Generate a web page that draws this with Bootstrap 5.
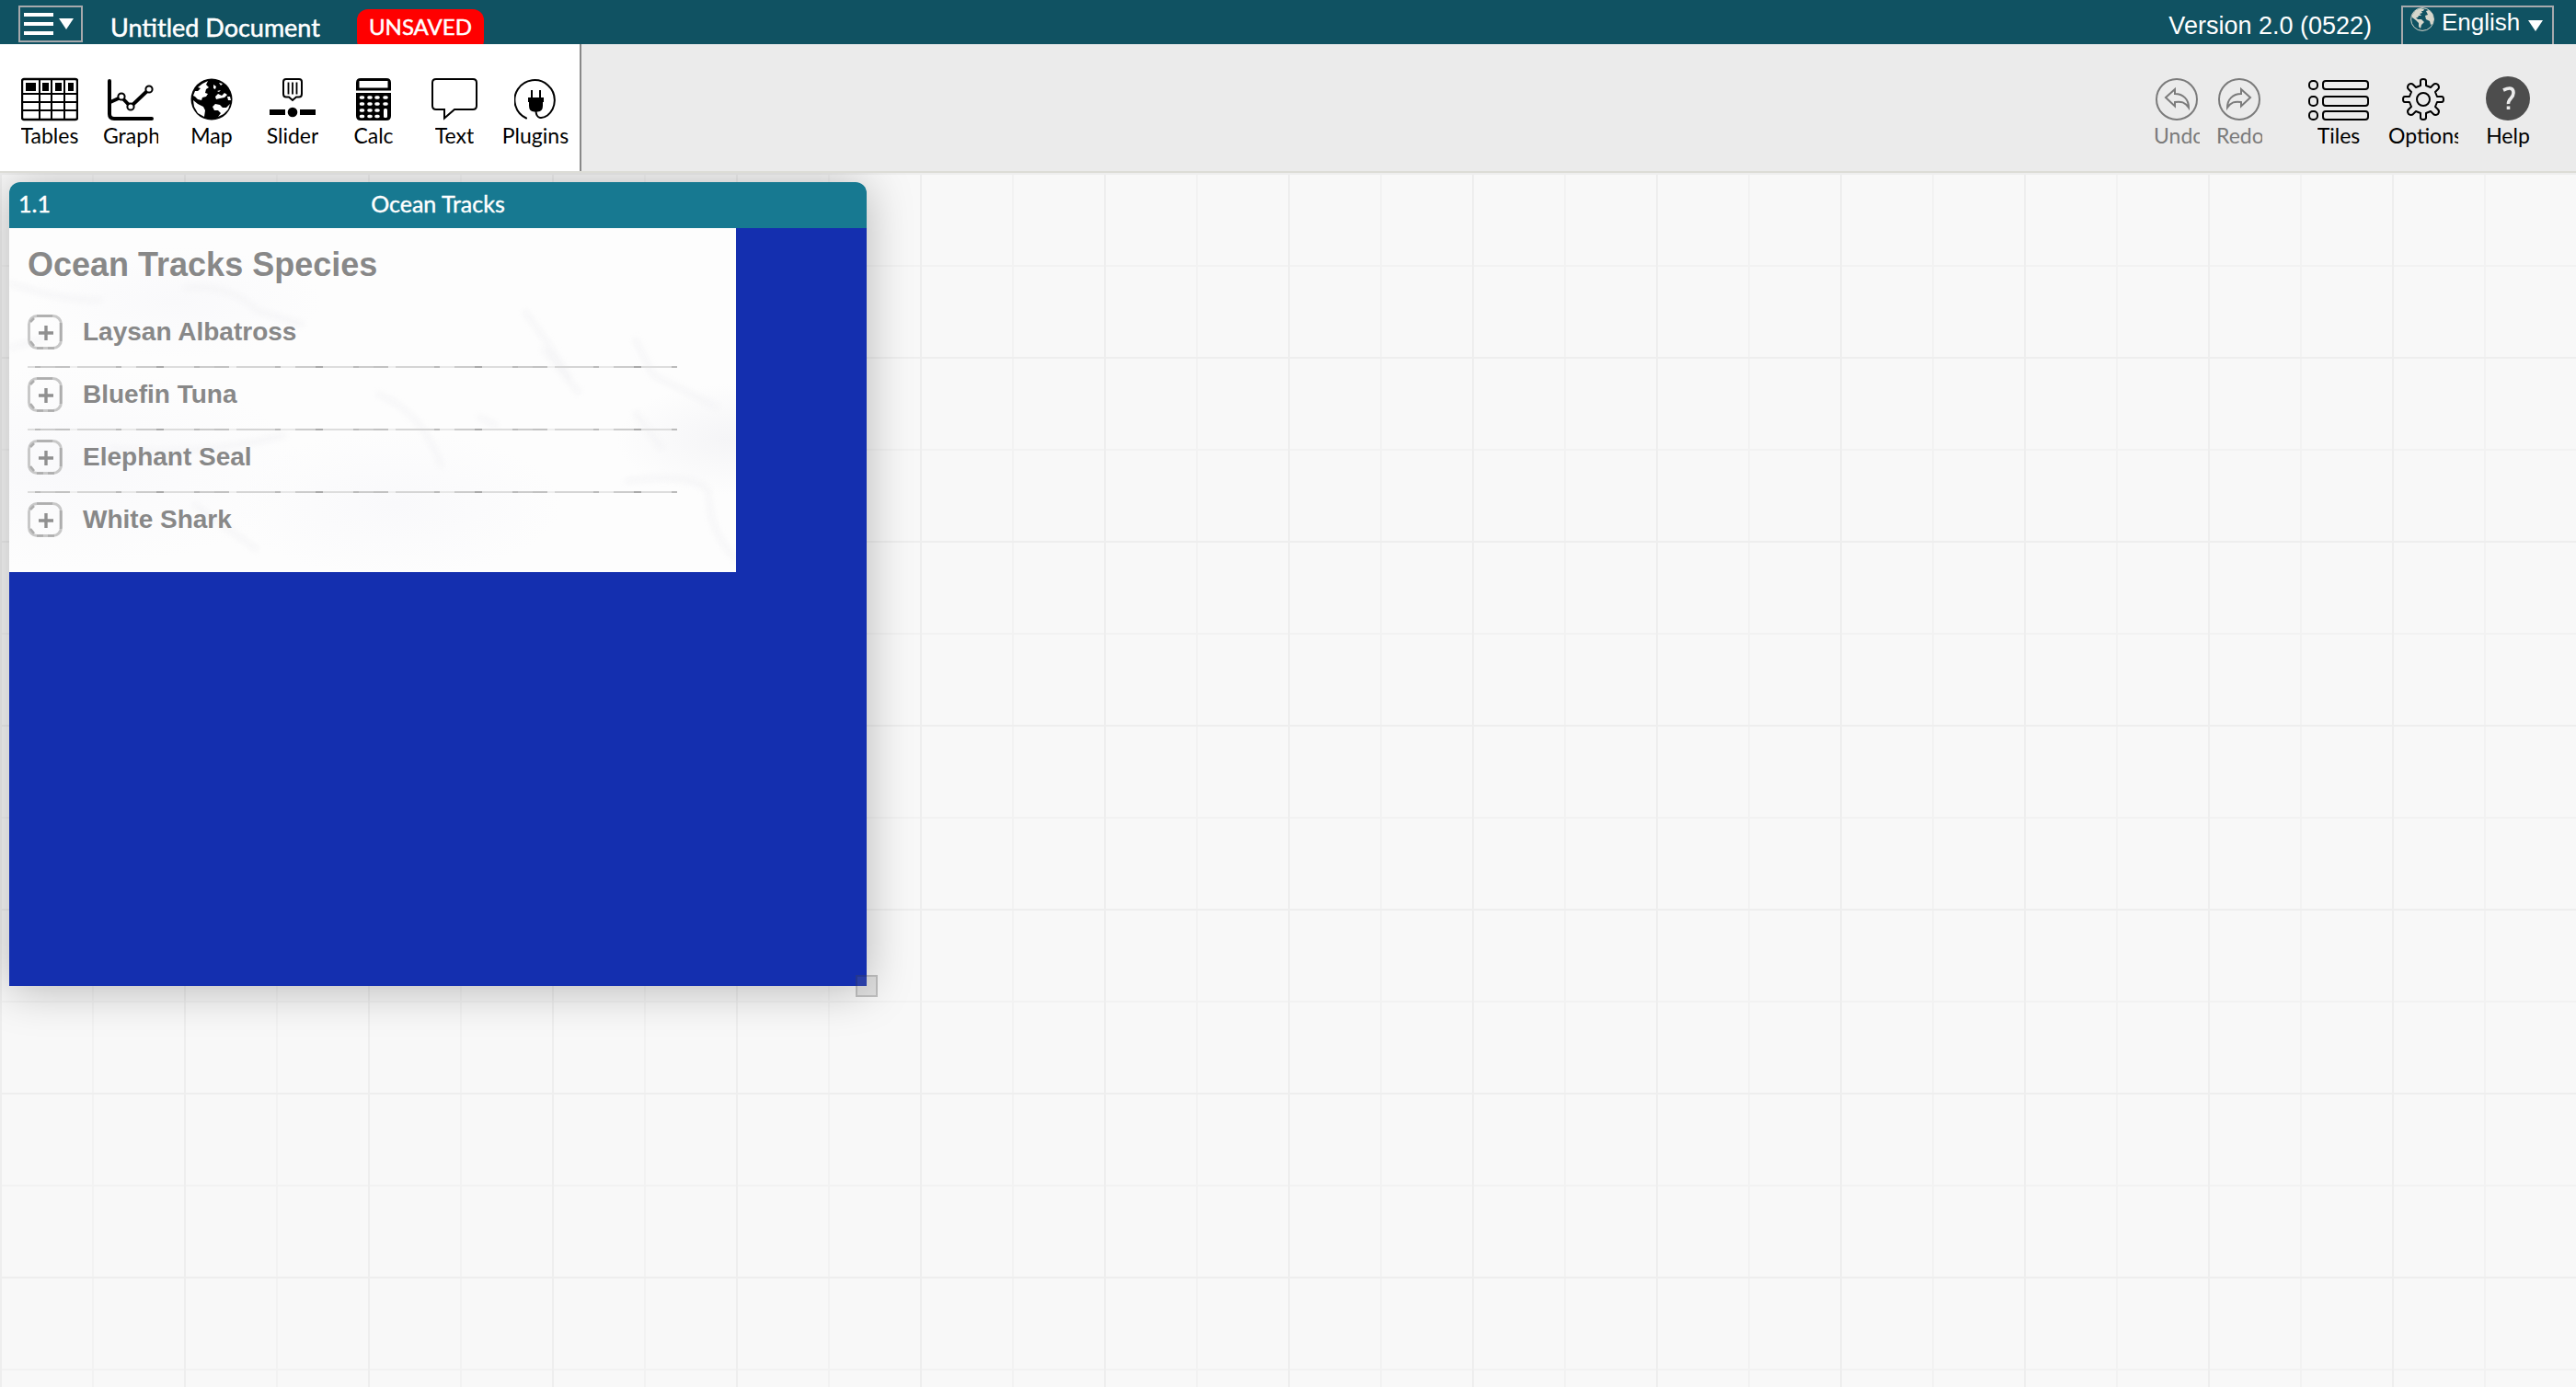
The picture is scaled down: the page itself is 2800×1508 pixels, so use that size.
<!DOCTYPE html>
<html lang="en">
<head>
<meta charset="utf-8">
<meta name="viewport" content="width=device-width, initial-scale=1">
<title>Untitled Document</title>
<link href="https://cdn.jsdelivr.net/npm/bootstrap@5.3.0/dist/css/bootstrap.min.css" rel="stylesheet">
<style>
  body { font-family: Lato, sans-serif; background: #f8f8f8; color: #000; }
  .topbar { height: 48px; background: #105262; color: #fff; padding: 6px 24px 0 20px; overflow: hidden; }
  .outlined { border: 2px solid #a7a9ac; background: none; color: #fff; }
  .menu-btn { width: 70px; height: 40px; padding: 0 8px 0 4px; }
  .doc-name { font-size: 27px; line-height: 32px; margin: 8px 40px 0 30px; -webkit-text-stroke: 0.5px #fff; }
  .unsaved { width: 138px; height: 46px; margin-top: 4px; border-radius: 12px; background: #f00; font-size: 24px; line-height: 38px; -webkit-text-stroke: 0.5px #fff; }
  .arial { font-family: "Liberation Sans", sans-serif; }
  .version { font-size: 27px; line-height: 32px; margin: 6px 32px 0 0; }
  .lang-box { width: 166px; height: 50px; padding-left: 8px; }
  .lang-box select { appearance: none; border: 0; background: none; color: #fff; font-size: 26px; line-height: 32px; width: 94px; padding: 0; margin-left: 8px; }
  .lang-box .caret { margin: 14px 10px 0 auto; }
  .toolbar { height: 140px; background: #ebebeb; border-bottom: 2px solid #dcdcd6; }
  .palette { background: #fff; border-right: 2px solid #888; padding: 0 4px 0 10px; }
  .history { margin-right: 28px; }
  .right-tools { padding-right: 28px; }
  .tool { width: 88px; padding: 35px 0 0; border: 0; background: none; font-size: 23px; line-height: 28px; color: #000; }
  .tool svg { height: 50px; display: block; }
  .tool span { overflow: hidden; white-space: nowrap; }
  .tool.narrow { width: 68px; color: #7b7b7b; }
  .tool.narrow span { width: 50px; text-align: left; }
  .tool.wide { width: 92px; }
  .cut-graph { width: 60px; }
  .cut-options { width: 76px; }
  .canvas-area { padding: 10px; background-color: #f8f8f8; overflow: hidden;
    background-image:
      linear-gradient(90deg, #eee 2px, transparent 2px),
      linear-gradient(#eee 2px, transparent 2px),
      linear-gradient(90deg, #f2f2f2 2px, transparent 2px),
      linear-gradient(#f2f2f2 2px, transparent 2px);
    background-size: 200px 200px, 200px 200px, 100px 100px, 100px 100px; }
  .tile { width: 932px; max-width: 100%; border-radius: 12px 12px 0 0; box-shadow: 0 3px 50px rgba(0,0,0,.27); }
  .tile-title { height: 50px; background: #177991; color: #fff; border-radius: 12px 12px 0 0; font-size: 25px; line-height: 28px; padding: 0 10px 4px; -webkit-text-stroke: 0.4px #fff; }
  .tile-body { height: 824px; background: #142faf; }
  .paper { width: 790px; max-width: 100%; height: 374px; padding: 20px 20px 0; color: #888; overflow: hidden;
    background:
      radial-gradient(ellipse 120px 60px at 780px 230px, #f5f5f7, transparent),
      radial-gradient(ellipse 160px 60px at 180px 80px, #f9f9fb, transparent),
      radial-gradient(ellipse 180px 80px at 420px 300px, #f9f9fb, transparent),
      radial-gradient(ellipse 260px 110px at 60px 260px, #f9f9fb, transparent),
      #fdfdfd; }
  .creases { inset: 0; filter: blur(3px); }
  .paper h1 { font-size: 36px; line-height: 40px; font-weight: 700; margin: 0 0 24px; }
  .species { width: 706px; max-width: 100%; }
  .species li { height: 68px; padding: 0 0 10px; gap: 22px; font-size: 28px; line-height: 32px; font-weight: 700; }
  .species li:not(:last-child) { background: repeating-linear-gradient(90deg, #ddd 0 8px, #bbb 8px 14px, #ccc 14px 30px, #c2c2c2 30px 46px, #eee 46px 54px, #d5d5d5 54px 96px, #bbb 96px 102px, #e8e8e8 102px 118px, #ccc 118px 140px, #aaa 140px 148px, #ddd 148px 173px) 0 100% / 100% 2px no-repeat; }
  .expander { width: 38px; height: 38px; padding: 0; border: 0; background: none; color: #888; }
  .grip { right: -12px; bottom: -12px; width: 24px; height: 24px; border: 2px solid rgba(0,0,0,.14); background: rgba(128,128,128,.2); cursor: nwse-resize; }
</style>
</head>
<body class="d-flex flex-column min-vh-100">

<svg width="0" height="0" class="position-absolute" aria-hidden="true">
  <symbol id="plusbox" viewBox="0 0 38 38">
    <rect x="1.5" y="1.5" width="35" height="35" rx="9" fill="none" stroke="#c8c8c8" stroke-width="3"/>
    <path d="M10 1.5H27M36 9V29M10 36.5H17M22 36.5H29M3 29L7 34M3 8L7 4" fill="none" stroke="#adadad" stroke-width="2.6"/>
    <path d="M12 20H28M20 12V28" stroke="#909090" stroke-width="3.4"/>
  </symbol>
</svg>

<header class="topbar d-flex align-items-start">
  <button class="menu-btn outlined d-flex align-items-center justify-content-between" type="button" aria-label="Menu">
    <svg width="32" height="24" fill="#fff"><path d="M0 0h32v4H0zM0 10h32v4H0zM0 20h32v4H0z"/></svg>
    <svg width="16" height="12" fill="#fff"><path d="M0 0h16L8 12z"/></svg>
  </button>
  <div class="doc-name">Untitled Document</div>
  <div class="unsaved text-center">UNSAVED</div>
  <div class="version arial ms-auto">Version 2.0 (0522)</div>
  <div class="lang-box outlined arial d-flex align-items-start flex-shrink-0">
    <svg width="26" height="26" color="#d6d6cb" viewBox="0 0 26 26">
      <circle cx="13" cy="13" r="12.4" fill="none" stroke="currentColor" stroke-width="1"/>
      <path fill="currentColor" d="M2 8L6 3L11 1L15 2L14 4L12 4L13 6L10 7L12 9L9 9L8 11L6 11L8 13L12 13L15 16L12 19L11 23L9 21L9 17L6 14L2 11ZM17 4L20 3L24 7L25.500 13L24 18L22 19L21 15L17 13L16 9L19 8Z"/>
    </svg>
    <select aria-label="Language"><option>English</option></select>
    <svg class="caret" width="16" height="12" fill="#fff"><path d="M0 0h16L8 12z"/></svg>
  </div>
</header>

<nav class="toolbar d-flex justify-content-between" aria-label="Tools">
  <div class="palette d-flex">
    <button class="tool d-flex flex-column align-items-center" type="button">
      <svg width="62" viewBox="0 0 62 50"><rect x="1" y="3" width="60" height="44" rx="2" fill="#fff" stroke="#000" stroke-width="2.4"/><path d="M20 3V47M33 3V47M47 3V47M1 19H61M1 28H61M1 37H61" stroke="#000" stroke-width="2"/><path d="M5 7H16V16H5zM23 7H30V16H23zM37 7H44V16H37zM51 7H57V16H51z"/></svg>
      <span>Tables</span></button>
    <button class="tool d-flex flex-column align-items-center" type="button">
      <svg width="50" viewBox="0 0 50 50"><path d="M2 5V41Q2 46 7 46H48" fill="none" stroke="#000" stroke-width="4" stroke-linecap="round"/><path d="M3 28L15 22.500L25 33L45 14" fill="none" stroke="#000" stroke-width="3.800"/><g fill="#fff" stroke="#000" stroke-width="2"><circle cx="15" cy="22" r="3.600"/><circle cx="25" cy="33" r="3.600"/><circle cx="45" cy="14" r="3.600"/></g></svg>
      <span class="cut-graph">Graph</span></button>
    <button class="tool d-flex flex-column align-items-center" type="button">
      <svg width="48" viewBox="0 0 48 50"><circle cx="24" cy="25" r="22.500"/><path fill="#fff" d="M9 12L14 8L20 5L18 9L21 12L18 14L17 18L20 19L18 22L14 23L13 26L9 25L6 22L4 21L6 16L9 16L12 13ZM4 26L9 30L15 33L17 37L16 44L9 40L5 33ZM26 9L29 11L28 14L26 13ZM32 7L36 8L34 10ZM28 22L31 19L35 21L38 18L41 20L38 23L33 24L29 25ZM30 16L34 15L32 17ZM25 33L28 30L33 31L36 34L40 34L44 30L42 36L37 41L31 44L34 40L31 37L27 37ZM41 22L44 22L45 26L42 26Z"/></svg>
      <span>Map</span></button>
    <button class="tool d-flex flex-column align-items-center" type="button">
      <svg width="50" viewBox="0 0 50 50"><path d="M18 3H32Q35 3 35 6V19Q35 22.500 32 22.500H29L25 26L21 22.500H18Q15 22.500 15 19V6Q15 3 18 3Z" fill="#fff" stroke="#000" stroke-width="2"/><path d="M20.500 6.500V19.500M25 6.500V19.500M29.500 6.500V19.500" stroke="#000" stroke-width="1.800"/><path d="M0 36H17V42H0zM33 36H50V42H33z"/><circle cx="25" cy="39" r="5.300"/></svg>
      <span>Slider</span></button>
    <button class="tool d-flex flex-column align-items-center" type="button">
      <svg width="38" viewBox="0 0 38 50"><path d="M5 2H33Q38 2 38 7V15.500H0V7Q0 2 5 2ZM0 18H38V43Q38 48 33 48H5Q0 48 0 43Z"/><path fill="#fff" d="M3.500 5H34.500V12.500H3.500Z"/><g stroke="#fff" stroke-width="3.600" stroke-linecap="round"><path d="M5.500 23H7.500M14 23H16M22 23H24M31 23H33M5.500 30H7.500M14 30H16M22 30H24M31 30H33M5.500 37H7.500M14 37H16M22 37H24M5.500 43.500H7.500M14 43.500H16M22 43.500H24"/></g><rect x="30" y="35" width="4" height="10" rx="1.500" fill="#fff"/></svg>
      <span>Calc</span></button>
    <button class="tool d-flex flex-column align-items-center" type="button">
      <svg width="50" viewBox="0 0 50 50"><path d="M5 3H45Q49 3 49 7V32Q49 36 45 36H25L14 45.500V36H5Q1 36 1 32V7Q1 3 5 3Z" fill="#fff" stroke="#000" stroke-width="2"/></svg>
      <span>Text</span></button>
    <button class="tool d-flex flex-column align-items-center" type="button">
      <svg width="46" viewBox="0 0 46 50"><path d="M13 45.500A21.700 21.700 0 1 1 36 42.500C31 46 24 47 23.500 38" fill="none" stroke="#000" stroke-width="2" stroke-linecap="round"/><path d="M18 15H20V23H27V15H29V23H32V28H31V32Q31 38 25.500 38.500H21.500Q16 38 16 32V28H15V23H18Z"/></svg>
      <span>Plugins</span></button>
  </div>
  <div class="right-tools d-flex">
    <div class="history d-flex">
      <button class="tool narrow d-flex flex-column align-items-center" type="button">
        <svg width="46" viewBox="0 0 46 50" fill="none" stroke="#7b7b7b" stroke-width="2"><circle cx="23" cy="25" r="22"/><path d="M11 23L21 14V19C30 19 36 25 36 34C32 28 28 27 21 28V32.500Z"/></svg>
        <span>Undo</span></button>
      <button class="tool narrow d-flex flex-column align-items-center" type="button">
        <svg width="46" viewBox="0 0 46 50" fill="none" stroke="#7b7b7b" stroke-width="2"><circle cx="23" cy="25" r="22"/><path d="M35 23L25 14V19C16 19 10 25 10 34C14 28 18 27 25 28V32.500Z"/></svg>
        <span>Redo</span></button>
    </div>
    <button class="tool wide d-flex flex-column align-items-center" type="button">
      <svg width="66" viewBox="0 0 66 50" fill="none" stroke="#000" stroke-width="2"><rect x="1" y="5" width="9" height="9" rx="4"/><rect x="16" y="5" width="49" height="9" rx="3"/><rect x="1" y="22" width="9" height="10" rx="4"/><rect x="16" y="22" width="49" height="10" rx="3"/><rect x="1" y="38" width="9" height="9" rx="4"/><rect x="16" y="38" width="49" height="9" rx="3"/></svg>
      <span>Tiles</span></button>
    <button class="tool wide d-flex flex-column align-items-center" type="button">
      <svg width="46" viewBox="0 0 46 50" fill="none" stroke="#000" stroke-width="2" stroke-linejoin="round"><circle cx="23" cy="25" r="7"/><path d="M20 5Q20 3 23 3Q26 3 26 5V10L31 12L34 9Q36 7 39 9Q41 12 39 14L36 17L38 22H43Q45 22 45 25Q45 28 43 28H38L36 33L39 36Q41 38 39 41Q36 43 34 41L31 38L26 40V45Q26 47 23 47Q20 47 20 45V40L15 38L12 41Q10 43 7 41Q5 38 7 36L10 33L8 28H3Q1 28 1 25Q1 22 3 22H8L10 17L7 14Q5 12 7 9Q10 7 12 9L15 12L20 10Z"/></svg>
      <span class="cut-options">Options</span></button>
    <button class="tool wide d-flex flex-column align-items-center" type="button">
      <svg width="48" viewBox="0 0 48 50"><circle cx="24" cy="24" r="24" fill="#4d4d4d"/><path d="M19 15Q30 10 30 18C30 24 24 24 24.500 30M24.500 32.500V36" fill="none" stroke="#ebebeb" stroke-width="3.600"/></svg>
      <span>Help</span></button>
  </div>
</nav>

<main class="canvas-area flex-grow-1">
  <section class="tile position-relative">
    <div class="tile-title d-flex align-items-center">
      <span class="col-2">1.1</span>
      <span class="col-8 text-center">Ocean Tracks</span>
    </div>
    <div class="tile-body">
      <div class="paper arial position-relative">
        <svg class="creases position-absolute w-100 h-100" viewBox="0 0 790 374" preserveAspectRatio="none" fill="none" stroke="#f3f3f5" stroke-width="4" aria-hidden="true"><path d="M0 60Q60 80 100 78M190 65Q240 60 270 90L320 105M0 130L40 120M560 90Q590 130 610 165M580 130L620 180M680 120L700 160L770 195M400 180Q450 200 470 260M510 205L530 215M670 275Q740 265 760 285Q760 330 790 360M110 240Q200 250 300 225M200 300L270 350M680 200L710 240"/></svg>
        <div class="position-relative">
          <h1>Ocean Tracks Species</h1>
          <ul class="species list-unstyled mb-0">
            <li class="d-flex align-items-center"><button class="expander d-flex" type="button" aria-label="Expand Laysan Albatross"><svg width="38" height="38"><use href="#plusbox"/></svg></button>Laysan Albatross</li>
            <li class="d-flex align-items-center"><button class="expander d-flex" type="button" aria-label="Expand Bluefin Tuna"><svg width="38" height="38"><use href="#plusbox"/></svg></button>Bluefin Tuna</li>
            <li class="d-flex align-items-center"><button class="expander d-flex" type="button" aria-label="Expand Elephant Seal"><svg width="38" height="38"><use href="#plusbox"/></svg></button>Elephant Seal</li>
            <li class="d-flex align-items-center"><button class="expander d-flex" type="button" aria-label="Expand White Shark"><svg width="38" height="38"><use href="#plusbox"/></svg></button>White Shark</li>
          </ul>
        </div>
      </div>
    </div>
    <div class="grip position-absolute"></div>
  </section>
</main>

<script src="https://cdn.jsdelivr.net/npm/bootstrap@5.3.0/dist/js/bootstrap.bundle.min.js"></script>
</body>
</html>
